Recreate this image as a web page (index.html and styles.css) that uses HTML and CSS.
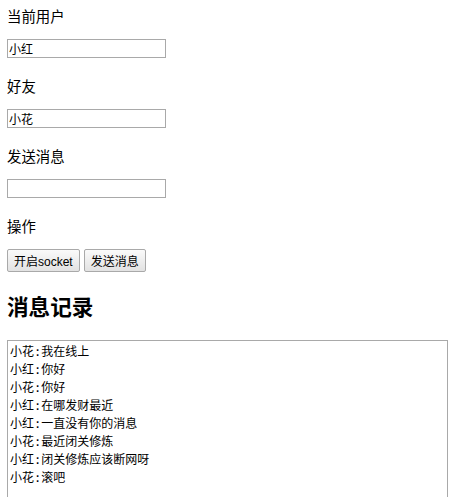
FILE: index.html
```html
<!DOCTYPE html>
<html lang="zh-CN">
<head>
  <meta charset="UTF-8">
  <meta name="viewport" content="width=device-width, initial-scale=1.0">
  <title>socket 聊天</title>
  <link rel="stylesheet" href="styles.css">
</head>
<body>
  <div class="field">
    <div class="label">当前用户</div>
    <input type="text" class="text-input" value="小红">
  </div>
  <div class="field">
    <div class="label">好友</div>
    <input type="text" class="text-input" value="小花">
  </div>
  <div class="field">
    <div class="label">发送消息</div>
    <input type="text" class="text-input" value="">
  </div>
  <div class="field">
    <div class="label">操作</div>
    <div class="actions">
      <button class="btn">开启socket</button>
      <button class="btn">发送消息</button>
    </div>
  </div>

  <h2>消息记录</h2>
  <textarea class="log" readonly>小花:我在线上
小红:你好
小花:你好
小红:在哪发财最近
小红:一直没有你的消息
小花:最近闭关修炼
小红:闭关修炼应该断网呀
小花:滚吧</textarea>
</body>
</html>
```

FILE: styles.css
```css
* { box-sizing: border-box; }
body {
  margin: 8px 7px;
  font-family: "Liberation Sans", "Noto Sans CJK SC", sans-serif;
  font-size: 14.4px;
  color: #000;
  background: #fff;
}
.field {
  margin-bottom: 20px;
}
.label {
  line-height: 18px;
  margin-bottom: 13px;
}
.text-input {
  display: block;
  width: 159px;
  height: 19px;
  padding: 0 1px;
  border: 1px solid #a9a9a9;
  font-family: "Liberation Sans", "Noto Sans CJK SC", sans-serif;
  font-size: 12px;
  color: #000;
  outline: none;
}
.actions {
  display: flex;
  gap: 4px;
}
.btn {
  height: 23px;
  padding: 0 6px;
  border: 1px solid #a9a9a9;
  border-radius: 2px;
  background: linear-gradient(180deg, #fafafa 0%, #e2e2e2 100%);
  font-family: "Liberation Sans", "Noto Sans CJK SC", sans-serif;
  font-size: 12px;
  color: #000;
}
h2 {
  margin: 23px 0 19px;
  font-size: 21.6px;
  line-height: 26px;
  font-weight: bold;
}
.log {
  display: block;
  width: 441px;
  height: 200px;
  padding: 2px;
  border: 1px solid #a9a9a9;
  font-family: "DejaVu Sans Mono", "Noto Sans CJK SC", monospace;
  font-size: 12px;
  line-height: 18px;
  color: #000;
  resize: none;
  outline: none;
}
```
